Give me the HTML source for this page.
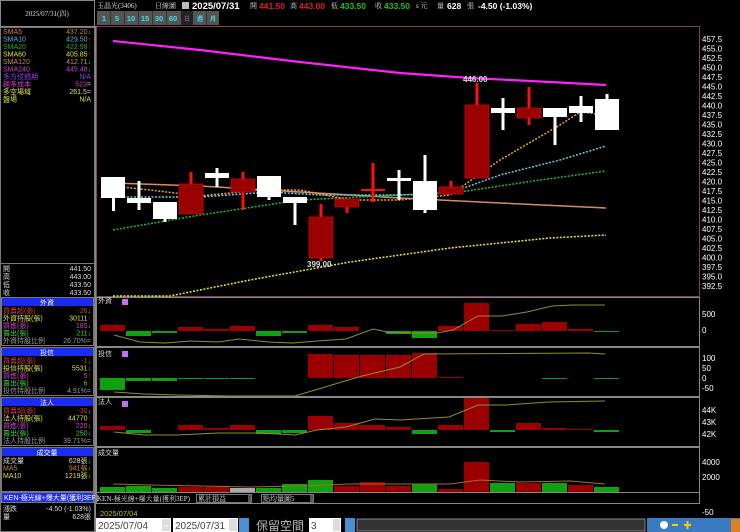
<!DOCTYPE html>
<html><head><meta charset="utf-8"><style>
html,body{margin:0;padding:0;background:#000;width:740px;height:532px;overflow:hidden}
svg{display:block}
text{font-family:"Liberation Sans","Noto Sans CJK TC",sans-serif}
.s{font-size:7px;font-family:"Liberation Serif","Noto Serif CJK SC",serif}
.ax{font-size:8px;fill:#fff;font-family:"Liberation Sans",sans-serif}
</style></head><body>
<svg width="740" height="532" viewBox="0 0 740 532" xmlns="http://www.w3.org/2000/svg">
<rect width="740" height="532" fill="#000"/>
<!-- left panel -->
<rect x="0.5" y="0.5" width="94" height="26" fill="none" stroke="#888"/>
<text x="47" y="16" class="s" fill="#ddd" text-anchor="middle">2025/07/31(四)</text>
<rect x="0.5" y="27.5" width="94" height="504" fill="none" stroke="#777"/>
<g class="s">
<text x="3" y="34" fill="#d08040">SMA5</text><text x="91" y="34" fill="#d08040" text-anchor="end">437.20<tspan fill="#0f0">↓</tspan></text>
<text x="3" y="41.5" fill="#60b0e0">SMA10</text><text x="91" y="41.5" fill="#60b0e0" text-anchor="end">429.50<tspan fill="#f00">↑</tspan></text>
<text x="3" y="49" fill="#20b020">SMA20</text><text x="91" y="49" fill="#20b020" text-anchor="end">422.58<tspan fill="#f00">↑</tspan></text>
<text x="3" y="56.5" fill="#e0e040">SMA60</text><text x="91" y="56.5" fill="#e0e040" text-anchor="end">405.85<tspan fill="#f00">↑</tspan></text>
<text x="3" y="64" fill="#c09060">SMA120</text><text x="91" y="64" fill="#c09060" text-anchor="end">412.71<tspan fill="#0f0">↓</tspan></text>
<text x="3" y="71.5" fill="#d040d0">SMA240</text><text x="91" y="71.5" fill="#d040d0" text-anchor="end">445.48<tspan fill="#0f0">↓</tspan></text>
<text x="3" y="79" fill="#9040e0">多方逆週期</text><text x="91" y="79" fill="#9040e0" text-anchor="end">N/A</text>
<text x="3" y="86.5" fill="#d040d0">趨多成本</text><text x="91" y="86.5" fill="#d040d0" text-anchor="end">523<tspan fill="#ccc">=</tspan></text>
<text x="3" y="94" fill="#e0e040">多空場域</text><text x="91" y="94" fill="#e0e040" text-anchor="end">261.5<tspan fill="#ccc">=</tspan></text>
<text x="3" y="101.5" fill="#e0e040">盤場</text><text x="91" y="101.5" fill="#e0e040" text-anchor="end">N/A</text>
<line x1="0" y1="263.5" x2="95" y2="263.5" stroke="#777"/>
<text x="3" y="271" fill="#ddd">開</text><text x="91" y="271" fill="#ddd" text-anchor="end">441.50</text>
<text x="3" y="279" fill="#ddd">高</text><text x="91" y="279" fill="#ddd" text-anchor="end">443.00</text>
<text x="3" y="287" fill="#ddd">低</text><text x="91" y="287" fill="#ddd" text-anchor="end">433.50</text>
<text x="3" y="295" fill="#ddd">收</text><text x="91" y="295" fill="#ddd" text-anchor="end">433.50</text>
</g>
<!-- section boxes -->
<g class="s">
<rect x="1.5" y="297.5" width="92" height="48" fill="none" stroke="#777"/>
<rect x="2" y="298" width="91" height="8" fill="#1a2cf0"/><text x="47" y="305" fill="#fff" text-anchor="middle">外資</text>
<text x="3" y="313" fill="#d04040">買賣超(張)</text><text x="91" y="313" fill="#d04040" text-anchor="end">-26<tspan fill="#0f0">↓</tspan></text>
<text x="3" y="320.5" fill="#e0e040">外資持股(張)</text><text x="91" y="320.5" fill="#e0e040" text-anchor="end">30111<tspan fill="#f00">↑</tspan></text>
<text x="3" y="328" fill="#d040d0">買進(張)</text><text x="91" y="328" fill="#d040d0" text-anchor="end">185<tspan fill="#0f0">↓</tspan></text>
<text x="3" y="335.5" fill="#40d040">賣出(張)</text><text x="91" y="335.5" fill="#40d040" text-anchor="end">211<tspan fill="#0f0">↓</tspan></text>
<text x="3" y="343" fill="#999">外資持股比例</text><text x="91" y="343" fill="#999" text-anchor="end">26.70%=</text>

<rect x="1.5" y="347.5" width="92" height="48" fill="none" stroke="#777"/>
<rect x="2" y="348" width="91" height="8" fill="#1a2cf0"/><text x="47" y="355" fill="#fff" text-anchor="middle">投信</text>
<text x="3" y="363" fill="#d04040">買賣超(張)</text><text x="91" y="363" fill="#d04040" text-anchor="end">-1<tspan fill="#0f0">↓</tspan></text>
<text x="3" y="370.5" fill="#e0e040">投信持股(張)</text><text x="91" y="370.5" fill="#e0e040" text-anchor="end">5531<tspan fill="#0f0">↓</tspan></text>
<text x="3" y="378" fill="#d040d0">買進(張)</text><text x="91" y="378" fill="#d040d0" text-anchor="end">5<tspan fill="#f00">↑</tspan></text>
<text x="3" y="385.5" fill="#40d040">賣出(張)</text><text x="91" y="385.5" fill="#40d040" text-anchor="end">6<tspan fill="#f00">↑</tspan></text>
<text x="3" y="393" fill="#999">投信持股比例</text><text x="91" y="393" fill="#999" text-anchor="end">4.91%=</text>

<rect x="1.5" y="397.5" width="92" height="48" fill="none" stroke="#777"/>
<rect x="2" y="398" width="91" height="8" fill="#1a2cf0"/><text x="47" y="405" fill="#fff" text-anchor="middle">法人</text>
<text x="3" y="413" fill="#d04040">買賣超(張)</text><text x="91" y="413" fill="#d04040" text-anchor="end">-30<tspan fill="#0f0">↓</tspan></text>
<text x="3" y="420.5" fill="#e0e040">法人持股(張)</text><text x="91" y="420.5" fill="#e0e040" text-anchor="end">44770<tspan fill="#f00">↑</tspan></text>
<text x="3" y="428" fill="#d040d0">買進(張)</text><text x="91" y="428" fill="#d040d0" text-anchor="end">220<tspan fill="#0f0">↓</tspan></text>
<text x="3" y="435.5" fill="#40d040">賣出(張)</text><text x="91" y="435.5" fill="#40d040" text-anchor="end">250<tspan fill="#0f0">↓</tspan></text>
<text x="3" y="443" fill="#999">法人持股比例</text><text x="91" y="443" fill="#999" text-anchor="end">39.71%=</text>

<rect x="1.5" y="447.5" width="92" height="44" fill="none" stroke="#777"/>
<rect x="2" y="448" width="91" height="8" fill="#1a2cf0"/><text x="47" y="455" fill="#fff" text-anchor="middle">成交量</text>
<text x="3" y="463" fill="#ddd">成交量</text><text x="91" y="463" fill="#ddd" text-anchor="end">628張<tspan fill="#0f0">↓</tspan></text>
<text x="3" y="470.5" fill="#d08040">MA5</text><text x="91" y="470.5" fill="#d08040" text-anchor="end">941張<tspan fill="#0f0">↓</tspan></text>
<text x="3" y="478" fill="#e0e040">MA10</text><text x="91" y="478" fill="#e0e040" text-anchor="end">1219張<tspan fill="#0f0">↓</tspan></text>

<rect x="1.5" y="492.5" width="92" height="10" fill="#1a2cf0" stroke="#777"/>
<text x="4" y="500" fill="#fff">KEN-極光線+爆大量(獲利3EP)</text>
<text x="3" y="511" fill="#ddd">漲跌</text><text x="91" y="511" fill="#ddd" text-anchor="end">-4.50 (-1.03%)</text>
<text x="3" y="519" fill="#ddd">量</text><text x="91" y="519" fill="#ddd" text-anchor="end">628張</text>
</g>

<!-- header -->
<text x="97" y="8" class="s" fill="#ddd">玉晶光(3406)</text>
<text x="155" y="8" class="s" fill="#ddd">日線圖</text>
<rect x="182" y="2" width="7" height="7" fill="#bbb"/>
<text x="192" y="9" font-size="9.5" font-weight="bold" fill="#fff">2025/07/31</text>
<text x="250" y="8" class="s" fill="#ddd">開</text><text x="259" y="9" font-size="8.5" font-weight="bold" fill="#e02020">441.50</text>
<text x="290" y="8" class="s" fill="#ddd">高</text><text x="299" y="9" font-size="8.5" font-weight="bold" fill="#e02020">443.00</text>
<text x="331" y="8" class="s" fill="#ddd">低</text><text x="340" y="9" font-size="8.5" font-weight="bold" fill="#20c020">433.50</text>
<text x="375" y="8" class="s" fill="#ddd">收</text><text x="384" y="9" font-size="8.5" font-weight="bold" fill="#20c020">433.50</text>
<text x="416" y="8" class="s" fill="#ddd">s 元</text>
<text x="437" y="8" class="s" fill="#ddd">量</text><text x="447" y="9" font-size="8.5" font-weight="bold" fill="#fff">628</text>
<text x="467" y="8" class="s" fill="#ddd">張</text>
<text x="478" y="9" font-size="8.5" font-weight="bold" fill="#fff">-4.50 (-1.03%)</text>
<!-- buttons -->
<g font-size="7.5" font-weight="bold" fill="#40e0e0" text-anchor="middle">
<rect x="97" y="11" width="84" height="14" fill="#555"/>
<rect x="181" y="11" width="12" height="14" fill="#222"/>
<rect x="193" y="11" width="26" height="14" fill="#555"/>
<g stroke="#333"><line x1="110.5" y1="11" x2="110.5" y2="25"/><line x1="124.5" y1="11" x2="124.5" y2="25"/><line x1="138.5" y1="11" x2="138.5" y2="25"/><line x1="152.5" y1="11" x2="152.5" y2="25"/><line x1="166.5" y1="11" x2="166.5" y2="25"/><line x1="206.5" y1="11" x2="206.5" y2="25"/></g>
<text x="104" y="21">1</text><text x="117" y="21">5</text><text x="131" y="21">10</text><text x="145" y="21">15</text><text x="159" y="21">30</text><text x="173" y="21">60</text>
<text x="187" y="21" fill="#666" font-size="6">日</text><text x="200" y="21" font-size="6">週</text><text x="213" y="21" font-size="6">月</text>
</g>
<!-- main chart frame -->
<line x1="95.5" y1="26" x2="95.5" y2="532" stroke="#888"/>
<rect x="96.5" y="26.5" width="603" height="270" fill="none" stroke="#804060"/>
<g class="ax">
<text x="702" y="42">457.5</text><text x="702" y="51.5">455.0</text><text x="702" y="61">452.5</text><text x="702" y="70.5">450.0</text><text x="702" y="80">447.5</text><text x="702" y="89.5">445.0</text><text x="702" y="99">442.5</text><text x="702" y="108.5">440.0</text><text x="702" y="118">437.5</text><text x="702" y="127.5">435.0</text><text x="702" y="137">432.5</text><text x="702" y="146.5">430.0</text><text x="702" y="156">427.5</text><text x="702" y="165.5">425.0</text><text x="702" y="175">422.5</text><text x="702" y="184.5">420.0</text><text x="702" y="194">417.5</text><text x="702" y="203.5">415.0</text><text x="702" y="213">412.5</text><text x="702" y="222.5">410.0</text><text x="702" y="232">407.5</text><text x="702" y="241.5">405.0</text><text x="702" y="251">402.5</text><text x="702" y="260.5">400.0</text><text x="702" y="270">397.5</text><text x="702" y="279.5">395.0</text><text x="702" y="289">392.5</text>
</g>
<!-- MA lines -->
<polyline fill="none" stroke="#ff20ff" stroke-width="2.2" points="113,41 200,50 300,62 400,73 470,78 550,82 606,85"/>
<polyline fill="none" stroke="#d09060" stroke-width="1.5" points="113,183 200,186 300,192 400,198 500,203 606,208"/>
<polyline fill="none" stroke="#e8e830" stroke-width="1.5" stroke-dasharray="2,1.5" points="113,296 170,296 250,280 350,262 450,248 550,238 606,235"/>
<polyline fill="none" stroke="#20c020" stroke-width="1.5" stroke-dasharray="2,1.5" points="113,230 200,215 300,200 400,195 460,192 540,180 606,171"/>
<polyline fill="none" stroke="#70c8e8" stroke-width="1.5" stroke-dasharray="2,1.5" points="113,197 200,197 270,192 320,195 400,195 450,193 500,175 560,160 606,146"/>
<polyline fill="none" stroke="#f0a040" stroke-width="1.5" stroke-dasharray="2,1.5" points="113,186 150,190 200,196 260,190 300,190 350,200 400,200 450,195 500,160 560,125 580,112 606,115"/>
<!-- candles -->
<g>
<!-- white -->
<g fill="#fff">
<rect x="112" y="177" width="3" height="34"/><rect x="101" y="177" width="24" height="21"/>
<rect x="137.5" y="181" width="3" height="29"/><rect x="127" y="198" width="24" height="5"/>
<rect x="163.5" y="202" width="3" height="20"/><rect x="153" y="202" width="24" height="17"/>
<rect x="215.5" y="168" width="3" height="19"/><rect x="205" y="173" width="24" height="5"/>
<rect x="267.5" y="176" width="3" height="24"/><rect x="257" y="176" width="24" height="21"/>
<rect x="293.5" y="197" width="3" height="28"/><rect x="283" y="197" width="24" height="6"/>
<rect x="397.5" y="170" width="3" height="30"/><rect x="387" y="178" width="24" height="3"/>
<rect x="423.5" y="155" width="3" height="58"/><rect x="413" y="181" width="24" height="29"/>
<rect x="501.5" y="98" width="3" height="32"/><rect x="491" y="108" width="24" height="5"/>
<rect x="553.5" y="108" width="3" height="37"/><rect x="543" y="108" width="24" height="9"/>
<rect x="579.5" y="96" width="3" height="26"/><rect x="569" y="106" width="24" height="7"/>
<rect x="605.5" y="94" width="3" height="36"/><rect x="595" y="99" width="24" height="31"/>
</g>
<g fill="#ff1010">
<rect x="189.5" y="172" width="3" height="42"/><rect x="241.5" y="172" width="3" height="38"/>
<rect x="319.5" y="204" width="3" height="57"/><rect x="345.5" y="199" width="3" height="14"/>
<rect x="371.5" y="163" width="3" height="39"/><rect x="361" y="189" width="24" height="2"/>
<rect x="449.5" y="181" width="3" height="13"/><rect x="475.5" y="83" width="3" height="95"/>
<rect x="527.5" y="87" width="3" height="38"/>
</g>
<g fill="#9a0000" stroke="#c01010" stroke-width="0.8">
<rect x="179" y="184" width="24" height="30"/><rect x="231" y="179" width="24" height="13"/>
<rect x="309" y="217" width="24" height="41"/><rect x="335" y="199" width="24" height="8"/>
<rect x="439" y="187" width="24" height="7"/><rect x="465" y="105" width="24" height="73"/>
<rect x="517" y="108" width="24" height="10"/>
</g>
<text x="307" y="267" font-size="8" font-weight="bold" fill="#ddd">399.00</text>
<text x="463" y="82" font-size="8" font-weight="bold" fill="#ddd">446.00</text>
</g>
<!-- sub panels frames -->
<g fill="none" stroke="#888">
<rect x="96.5" y="297.5" width="603" height="49"/>
<rect x="96.5" y="347.5" width="603" height="49"/>
<rect x="96.5" y="397.5" width="603" height="49"/>
<rect x="96.5" y="447.5" width="603" height="45"/>
<rect x="96.5" y="492.5" width="603" height="11"/>
</g>
<g class="s" fill="#ddd">
<text x="98" y="303">外資</text><text x="98" y="356">投信</text><text x="98" y="404">法人</text><text x="98" y="455">成交量</text>
</g>
<rect x="122" y="299" width="6" height="6" fill="#c070f0"/>
<rect x="122" y="351" width="6" height="6" fill="#c070f0"/>
<rect x="122" y="401" width="6" height="6" fill="#c070f0"/>
<g class="ax"><text x="702" y="317">500</text><text x="702" y="333">0</text>
<text x="702" y="361">100</text><text x="702" y="371">50</text><text x="702" y="381">0</text><text x="702" y="391">-50</text>
<text x="702" y="413">44K</text><text x="702" y="425">43K</text><text x="702" y="437">42K</text>
<text x="702" y="465">4000</text><text x="702" y="480">2000</text><text x="702" y="515">-50</text></g>
<!-- panel 1 bars -->
<g fill="#9a0000"><rect x="100" y="325" width="25" height="6"/><rect x="178" y="327" width="25" height="4"/><rect x="204" y="329" width="25" height="2"/><rect x="230" y="326" width="25" height="5"/><rect x="308" y="325" width="25" height="6"/><rect x="334" y="327" width="25" height="4"/><rect x="438" y="326" width="25" height="5"/><rect x="464" y="303" width="25" height="28"/><rect x="490" y="330" width="25" height="1"/><rect x="516" y="324" width="25" height="7"/><rect x="542" y="322" width="25" height="9"/><rect x="568" y="329" width="25" height="2"/></g>
<g fill="#10a010"><rect x="126" y="331" width="25" height="5"/><rect x="152" y="331" width="25" height="2"/><rect x="256" y="331" width="25" height="5"/><rect x="282" y="331" width="25" height="2"/><rect x="386" y="331" width="25" height="3"/><rect x="412" y="331" width="25" height="7"/><rect x="594" y="331" width="25" height="1"/></g>
<polyline fill="none" stroke="#909020" stroke-width="1" points="114,335 140,342 165,343 190,341 218,342 239,339 268,342 293,343 317,341 346,339 373,329 387,332 412,333 437,333 453,330 478,316 502,316 527,312 552,306 572,305 605,305"/>
<!-- panel 2 bars -->
<g fill="#10a010"><rect x="100" y="378" width="25" height="12"/><rect x="126" y="378" width="25" height="3"/><rect x="152" y="378" width="25" height="3"/><rect x="178" y="378" width="25" height="1"/><rect x="204" y="378" width="25" height="1"/><rect x="230" y="378" width="25" height="1"/><rect x="542" y="378" width="25" height="1"/><rect x="594" y="378" width="25" height="1"/></g>
<g fill="#9a0000"><rect x="308" y="354" width="25" height="24"/><rect x="334" y="355" width="25" height="23"/><rect x="360" y="355" width="25" height="23"/><rect x="386" y="355" width="25" height="23"/><rect x="412" y="353" width="25" height="25"/><rect x="438" y="377" width="25" height="1"/></g>
<polyline fill="none" stroke="#909020" stroke-width="1" points="114,392 144,394 177,395 231,396 295,396 325,387 362,376 400,367 424,354 589,353 605,354"/>
<!-- panel 3 bars -->
<g fill="#9a0000"><rect x="100" y="426" width="25" height="4"/><rect x="178" y="425" width="25" height="5"/><rect x="204" y="428" width="25" height="2"/><rect x="230" y="425" width="25" height="5"/><rect x="308" y="416" width="25" height="14"/><rect x="334" y="423" width="25" height="7"/><rect x="360" y="425" width="25" height="5"/><rect x="386" y="427" width="25" height="3"/><rect x="438" y="425" width="25" height="5"/><rect x="464" y="398" width="25" height="32"/><rect x="516" y="423" width="25" height="7"/><rect x="542" y="428" width="25" height="2"/><rect x="568" y="429" width="25" height="1"/></g>
<g fill="#10a010"><rect x="126" y="430" width="25" height="3"/><rect x="256" y="430" width="25" height="4"/><rect x="282" y="430" width="25" height="3"/><rect x="412" y="430" width="25" height="4"/><rect x="490" y="430" width="25" height="2"/><rect x="594" y="430" width="25" height="2"/></g>
<polyline fill="none" stroke="#909020" stroke-width="1" points="114,432 144,435 177,435 218,433 260,433 295,435 317,430 346,427 375,419 400,420 449,417 478,405 507,405 548,402 605,401"/>
<!-- volume bars -->
<g fill="#10a010"><rect x="100" y="487" width="25" height="5"/><rect x="126" y="486" width="25" height="6"/><rect x="152" y="488" width="25" height="4"/><rect x="256" y="488" width="25" height="4"/><rect x="282" y="484" width="25" height="8"/><rect x="308" y="480" width="25" height="12"/><rect x="412" y="484" width="25" height="8"/><rect x="490" y="483" width="25" height="9"/><rect x="542" y="483" width="25" height="9"/><rect x="594" y="487" width="25" height="5"/></g>
<g fill="#9a0000"><rect x="178" y="487" width="25" height="5"/><rect x="204" y="487" width="25" height="5"/><rect x="334" y="486" width="25" height="6"/><rect x="360" y="482" width="25" height="10"/><rect x="386" y="486" width="25" height="6"/><rect x="438" y="489" width="25" height="3"/><rect x="464" y="462" width="25" height="30"/><rect x="516" y="483" width="25" height="9"/><rect x="568" y="485" width="25" height="7"/></g>
<rect x="230" y="488" width="25" height="4" fill="#aaa"/>
<polyline fill="none" stroke="#a07020" stroke-width="1" points="113,484 150,485 200,486 250,487 300,486 350,484 400,484 450,484 480,480 520,482 570,481 605,484"/>
<!-- select row -->
<rect x="196.5" y="494.5" width="55" height="8" fill="#000" stroke="#777"/><text x="198" y="501" class="s" fill="#ddd">累計損益</text><rect x="248" y="495" width="3" height="7" fill="#555"/>
<rect x="261.5" y="494.5" width="52" height="8" fill="#000" stroke="#777"/><text x="263" y="501" class="s" fill="#ddd">點均量圖5</text><rect x="310" y="495" width="3" height="7" fill="#555"/>
<text x="97" y="501" class="s" fill="#ddd">KEN-極光線+爆大量(獲利3EP)</text>
<text x="100" y="516" font-size="7.5" fill="#c0c020">2025/07/04</text>
<!-- bottom input row -->
<rect x="96" y="518" width="75" height="14" fill="#fff"/><text x="98" y="529" font-size="10" fill="#444">2025/07/04</text><rect x="162" y="519" width="8" height="12" fill="#ddd"/>
<text x="164" y="529" font-size="9" fill="#fff">~</text>
<rect x="173" y="518" width="65" height="14" fill="#fff"/><text x="175" y="529" font-size="10" fill="#444">2025/07/31</text><rect x="229" y="519" width="8" height="12" fill="#ddd"/>
<rect x="239" y="518" width="10" height="14" fill="#4a90d0"/>
<text x="256" y="530" font-size="12" fill="#bbb" font-family="'Noto Sans CJK TC',sans-serif">保留空間</text>
<rect x="309" y="518" width="32" height="14" fill="#fff"/><text x="311" y="529" font-size="10" fill="#444">3</text><rect x="333" y="519" width="7" height="12" fill="#ddd"/>
<rect x="345" y="518" width="10" height="14" fill="#4a90d0"/>
<rect x="357" y="519" width="288" height="12" fill="#333" stroke="#888"/>
<rect x="647" y="518" width="93" height="14" fill="#3a7ac0"/>
<circle cx="664" cy="525" r="4" fill="#fff"/><rect x="672" y="524" width="6" height="2" fill="#fc0"/><path d="M684,525h7M687.5,521v8" stroke="#fc0" stroke-width="2"/>
<rect x="731" y="519" width="9" height="13" fill="#e08020"/>
</svg>
</body></html>
